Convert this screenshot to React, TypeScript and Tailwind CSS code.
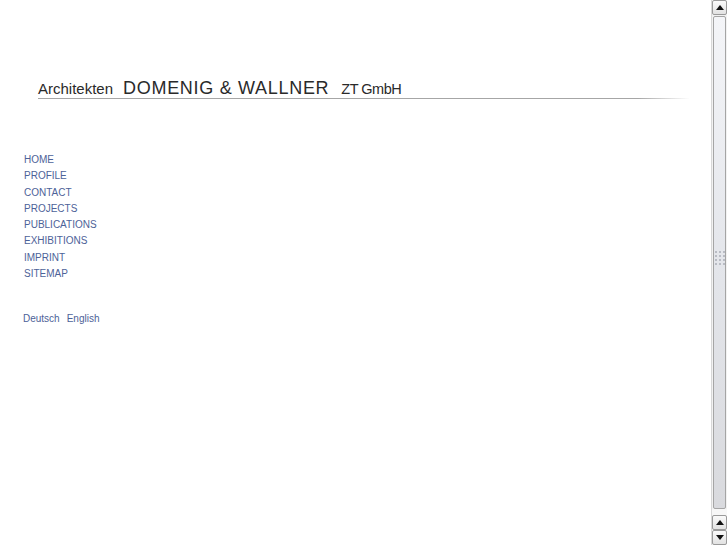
import React from "react";

const navItems = [
  "HOME",
  "PROFILE",
  "CONTACT",
  "PROJECTS",
  "PUBLICATIONS",
  "EXHIBITIONS",
  "IMPRINT",
  "SITEMAP",
];

const ArrowButton: React.FC<{ down?: boolean }> = ({ down }) => (
  <div className="h-[15px] w-full flex items-center justify-center rounded-[2px] border border-[#9a9a9a] bg-gradient-to-b from-[#fafafa] to-[#e2e2e2]">
    <svg width="8" height="5" viewBox="0 0 8 5">
      {down ? (
        <polygon points="0,0 8,0 4,5" fill="#111" />
      ) : (
        <polygon points="0,5 8,5 4,0" fill="#111" />
      )}
    </svg>
  </div>
);

const Scrollbar: React.FC = () => (
  <div className="w-[16px] h-[545px] flex flex-col bg-[#f2f2f2] border-l border-[#d8d8d8]">
    <ArrowButton />
    {/* thumb */}
    <div className="flex-1 mt-[1px] mx-[1px] rounded-[2px] border border-[#a5a5a5] bg-gradient-to-b from-[#f4f5f8] via-[#e4e6eb] to-[#d9dade] flex items-center justify-center">
      <div className="grid grid-cols-3 gap-[2px] mb-[10px]">
        {Array.from({ length: 12 }).map((_, i) => (
          <div key={i} className="w-[2px] h-[2px] bg-[#b9bcc4]" />
        ))}
      </div>
    </div>
    <div className="h-[6px] bg-[#f7f7f7]" />
    <ArrowButton />
    <ArrowButton down />
  </div>
);

export default function App() {
  return (
    <div className="flex w-[727px] h-[545px] bg-white overflow-hidden">
      <div className="flex-1 flex flex-col">
        {/* header */}
        <div className="pt-[79px] pl-[38px]">
          <div
            className="flex items-baseline text-[#2a2a2a] leading-none"
            style={{ fontFamily: '"Liberation Sans", Arial, sans-serif' }}
          >
            <span className="text-[15px]">Architekten</span>
            <span className="text-[18px] tracking-[0.7px] ml-[10px]">
              DOMENIG &amp; WALLNER
            </span>
            <span className="text-[14.5px] tracking-[-0.5px] ml-[12px]">
              ZT GmbH
            </span>
          </div>
          <div className="mt-[1px] h-px w-[652px] bg-gradient-to-r from-[#a6a6a6] via-[#a6a6a6] via-[92%] to-transparent" />
        </div>

        {/* navigation */}
        <div
          className="pl-[24px] mt-[53px] flex flex-col text-[10px] text-[#4d6298]"
          style={{ fontFamily: '"Liberation Sans", Arial, sans-serif' }}
        >
          {navItems.map((item) => (
            <a key={item} className="h-[16.3px] leading-[16.3px] cursor-pointer">
              {item}
            </a>
          ))}
          <div className="mt-[29px] flex gap-[7px] text-[10px] leading-[16px] -ml-[1px]">
            <a className="cursor-pointer">Deutsch</a>
            <a className="cursor-pointer">English</a>
          </div>
        </div>
      </div>
      <Scrollbar />
    </div>
  );
}
